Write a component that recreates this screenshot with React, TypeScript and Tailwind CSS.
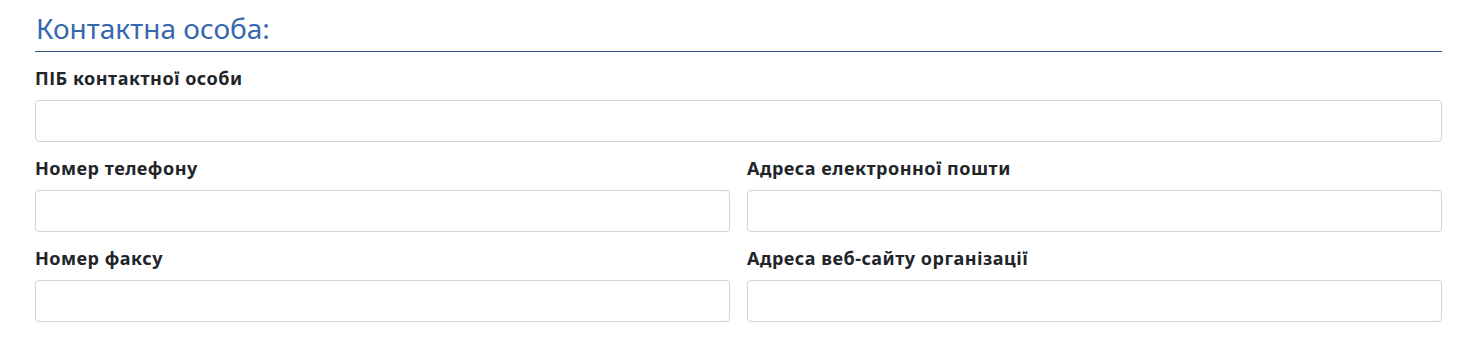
export default function App() {
  const label = 'block text-[18px] font-bold text-[#212529] leading-[24px] mb-[10px] tracking-[0.5px]';
  const input = 'block w-full h-[42px] rounded-[4px] border border-[#ced4da] bg-white';

  return (
    <div className="bg-white h-[342px] w-[1483px] pl-[35px] pr-[41px] pt-[9px]" style={{ fontFamily: '"Noto Sans", "Open Sans", sans-serif' }}>
      <h2 className="text-[28px] leading-[38px] text-[#3568ad] pl-[1px] pb-[4px] border-b border-[#2c5896]">Контактна особа:</h2>
      <div className="pt-[14px]">
        <label className={label}>ПІБ контактної особи</label>
        <input className={input} type="text" />
      </div>
      <div className="grid grid-cols-2 gap-x-[17px]">
        <div className="pt-[14px]">
          <label className={label}>Номер телефону</label>
          <input className={input} type="text" />
        </div>
        <div className="pt-[14px]">
          <label className={label}>Адреса електронної пошти</label>
          <input className={input} type="text" />
        </div>
        <div className="pt-[14px]">
          <label className={label}>Номер факсу</label>
          <input className={input} type="text" />
        </div>
        <div className="pt-[14px]">
          <label className={label}>Адреса веб-сайту організації</label>
          <input className={input} type="text" />
        </div>
      </div>
    </div>
  );
}
